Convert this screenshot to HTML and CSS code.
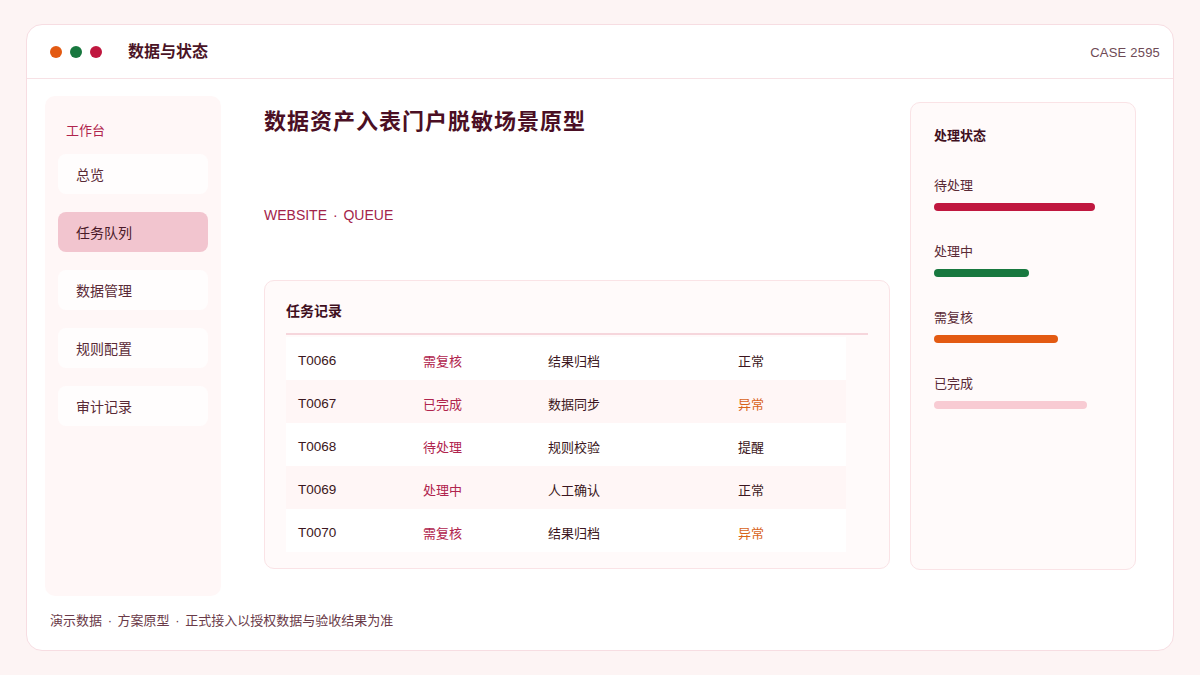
FILE: index.html
```html
<!DOCTYPE html>
<html lang="zh-CN">
<head>
<meta charset="utf-8">
<title>数据与状态</title>
<link rel="stylesheet" href="styles.css">
</head>
<body>
<div class="frame">
  <header class="topbar">
    <div class="dots"><span class="dot orange"></span><span class="dot green"></span><span class="dot red"></span></div>
    <div class="app-title">数据与状态</div>
    <div class="case">CASE 2595</div>
  </header>
  <div class="content">
    <aside class="sidebar">
      <div class="side-label">工作台</div>
      <nav class="nav">
        <div class="nav-item">总览</div>
        <div class="nav-item active">任务队列</div>
        <div class="nav-item">数据管理</div>
        <div class="nav-item">规则配置</div>
        <div class="nav-item">审计记录</div>
      </nav>
    </aside>
    <main class="main">
      <h1 class="page-title">数据资产入表门户脱敏场景原型</h1>
      <div class="subtitle">WEBSITE <span class="sep">·</span> QUEUE</div>
      <section class="table-card">
        <h2 class="card-title">任务记录</h2>
        <div class="rows">
          <div class="row"><span class="c1">T0066</span><span class="c2">需复核</span><span class="c3">结果归档</span><span class="c4">正常</span></div>
          <div class="row alt"><span class="c1">T0067</span><span class="c2">已完成</span><span class="c3">数据同步</span><span class="c4 warn">异常</span></div>
          <div class="row"><span class="c1">T0068</span><span class="c2">待处理</span><span class="c3">规则校验</span><span class="c4">提醒</span></div>
          <div class="row alt"><span class="c1">T0069</span><span class="c2">处理中</span><span class="c3">人工确认</span><span class="c4">正常</span></div>
          <div class="row"><span class="c1">T0070</span><span class="c2">需复核</span><span class="c3">结果归档</span><span class="c4 warn">异常</span></div>
        </div>
      </section>
    </main>
    <aside class="status-card">
      <h2 class="card-title">处理状态</h2>
      <div class="stat"><div class="stat-label">待处理</div><div class="bar red" style="width:161px"></div></div>
      <div class="stat"><div class="stat-label">处理中</div><div class="bar green" style="width:95px"></div></div>
      <div class="stat"><div class="stat-label">需复核</div><div class="bar orange" style="width:124px"></div></div>
      <div class="stat"><div class="stat-label">已完成</div><div class="bar pink" style="width:153px"></div></div>
    </aside>
  </div>
  <footer class="footer">演示数据 <span class="sep">·</span> 方案原型 <span class="sep">·</span> 正式接入以授权数据与验收结果为准</footer>
</div>
</body>
</html>
```
FILE: styles.css
```css
* { box-sizing: border-box; }
html, body { margin: 0; padding: 0; }
body {
  background: #fdf4f4;
  font-family: "Liberation Sans", "Noto Sans CJK SC", sans-serif;
  color: #3b1620;
  width: 1200px;
  height: 675px;
  overflow: hidden;
}
.frame {
  margin: 24px 0 0 26px;
  width: 1148px;
  height: 627px;
  background: #ffffff;
  border: 1px solid #f7dde2;
  border-radius: 16px;
}
.topbar {
  height: 54px;
  display: flex;
  align-items: center;
  padding: 0 13px 0 23px;
  border-bottom: 1px solid #f7e1e5;
}
.dots { display: flex; gap: 8px; }
.dot { width: 12px; height: 12px; border-radius: 50%; display: block; }
.dot.orange { background: #e35a12; }
.dot.green { background: #18783f; }
.dot.red { background: #c0173f; }
.app-title {
  margin-left: 26px;
  font-size: 16px;
  line-height: 20px;
  font-weight: 700;
  color: #4a1426;
}
.case {
  margin-left: auto;
  font-size: 13px;
  color: #6e4a55;
  margin-top: 2px;
  letter-spacing: 0.2px;
}
.sep { margin: 0 2px; }
.content {
  display: flex;
  align-items: flex-start;
  padding: 17px 0 0 18px;
}
.sidebar {
  width: 176px;
  height: 500px;
  background: #fff7f7;
  border-radius: 10px;
  padding: 25px 13px 0;
}
.side-label {
  font-size: 13px;
  line-height: 20px;
  color: #b0244d;
  padding-left: 8px;
}
.nav {
  margin-top: 13px;
  display: flex;
  flex-direction: column;
  gap: 18px;
}
.nav-item {
  height: 40px;
  line-height: 42px;
  padding-left: 18px;
  background: #fffdfd;
  border-radius: 8px;
  font-size: 14px;
  color: #5a2a36;
}
.nav-item.active { background: #f2c5cf; color: #4a1a28; }
.main {
  width: 626px;
  margin-left: 43px;
  margin-top: 11px;
}
.page-title {
  margin: 0;
  font-size: 22px;
  line-height: 30px;
  font-weight: 700;
  color: #4b0f24;
  letter-spacing: 1px;
}
.subtitle {
  margin-top: 68px;
  font-size: 14px;
  line-height: 20px;
  color: #a3244a;
}
.table-card {
  margin-top: 55px;
  background: #fffafa;
  border: 1px solid #fae3e6;
  border-radius: 10px;
  padding: 20px 21px 16px 21px;
}
.card-title {
  margin: 0;
  font-size: 14px;
  line-height: 20px;
  font-weight: 700;
  color: #3f0f1e;
}
.table-card .card-title { padding-bottom: 12px; border-bottom: 2px solid #f6d6dc; }
.rows { margin-top: 2px; width: 560px; }
.row {
  height: 43px;
  display: flex;
  align-items: center;
  padding: 3px 0 0 12px;
  background: #ffffff;
  font-size: 13px;
}
.row.alt { background: #fff6f6; }
.c1 { width: 125px; color: #3b1620; font-size: 13.5px; }
.c2 { width: 125px; color: #b0244d; }
.c3 { width: 190px; color: #3b1620; }
.c4 { color: #3b1620; }
.c4.warn { color: #d8631a; }
.status-card {
  width: 226px;
  height: 468px;
  margin-left: 20px;
  margin-top: 6px;
  background: #fffafa;
  border: 1px solid #fae3e6;
  border-radius: 10px;
  padding: 23px 23px;
}
.status-card .card-title { font-size: 13px; }
.stat { margin-top: 30px; }
.stat + .stat { margin-top: 31px; }
.stat-label {
  font-size: 13px;
  line-height: 20px;
  color: #5a2a36;
}
.bar { height: 8px; border-radius: 4px; margin-top: 7px; }
.bar.red { background: #c0173f; }
.bar.green { background: #18783f; }
.bar.orange { background: #e35a12; }
.bar.pink { background: #f8cbd3; }
.footer {
  margin-top: 15px;
  padding-left: 23px;
  font-size: 13px;
  line-height: 20px;
  color: #6a3a48;
}
```
